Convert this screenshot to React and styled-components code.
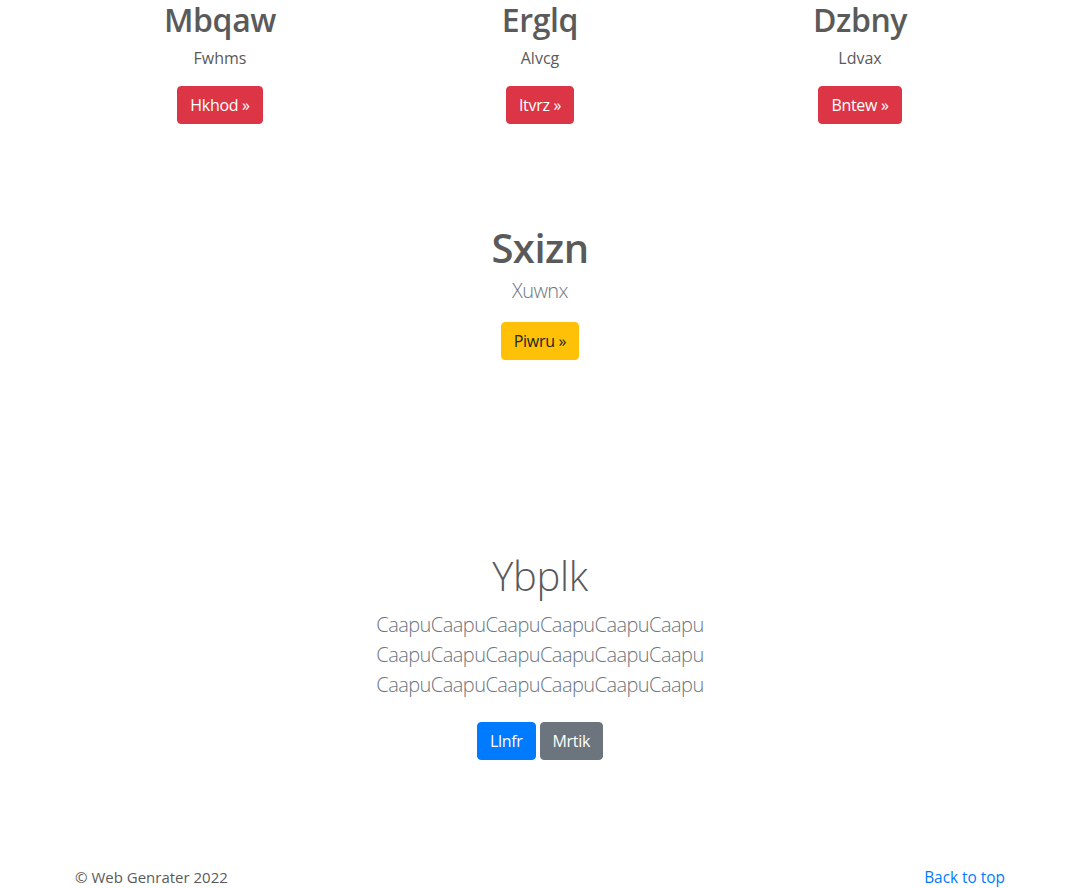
import React from "react";
import styled, { createGlobalStyle } from "styled-components";

const GlobalStyle = createGlobalStyle`
  html, body {
    margin: 0;
    padding: 0;
    background: #fff;
  }
  body {
    font-family: "Open Sans", "Noto Sans", "Liberation Sans", sans-serif;
    font-size: 16px;
    line-height: 1.5;
    color: #5a5a5a;
  }
  * {
    box-sizing: border-box;
  }
`;

const Page = styled.div`
  padding-top: 1px;
`;

const Container = styled.div`
  max-width: 960px;
  margin: 0 auto;
  padding: 0 15px;
`;

const Row = styled.div`
  display: grid;
  grid-template-columns: repeat(3, 1fr);
  margin: 0 -15px;
`;

const Col = styled.div`
  padding: 0 15px;
  text-align: center;
`;

const ColTitle = styled.h2`
  margin: 0 0 7px;
  font-size: 32px;
  font-weight: 600;
  line-height: 1.2;
  letter-spacing: -0.4px;
  color: #5a5a5a;
`;

const Text = styled.p`
  margin: 0 0 16px;
`;

const Section = styled.section`
  text-align: center;
  margin-top: ${(p) => p.$gap}px;
`;

const BigTitle = styled.h1`
  margin: 0 0 ${(p) => p.$mb}px;
  font-size: 40px;
  line-height: 1.2;
  font-weight: ${(p) => (p.$light ? 300 : 600)};
  letter-spacing: ${(p) => (p.$light ? "-0.3px" : "-0.5px")};
  color: #5a5a5a;
`;

const Lead = styled.p`
  margin: 0 0 ${(p) => p.$mb}px;
  font-size: 20px;
  font-weight: 300;
  line-height: 1.5;
  color: #6c757d;
  white-space: pre-line;
  letter-spacing: -0.55px;
`;

const tones = {
  danger: { bg: "#dc3545", fg: "#fff" },
  warning: { bg: "#ffc107", fg: "#212529" },
  primary: { bg: "#007bff", fg: "#fff" },
  secondary: { bg: "#6c757d", fg: "#fff" },
};

const Button = styled.a`
  display: inline-block;
  padding: 6px 12px;
  border: 1px solid ${(p) => tones[p.$tone].bg};
  border-radius: 4px;
  background: ${(p) => tones[p.$tone].bg};
  color: ${(p) => tones[p.$tone].fg};
  font-size: 16px;
  line-height: 1.5;
  text-decoration: none;
  letter-spacing: -0.3px;
`;

const ButtonGroup = styled.div`
  display: flex;
  justify-content: center;
  gap: 4px;
`;

const Footer = styled.footer`
  margin-top: 105px;
  display: flex;
  justify-content: space-between;
  align-items: baseline;
  line-height: 24px;
  font-size: 15px;
`;

const TopLink = styled.a`
  color: #007bff;
  text-decoration: none;
  font-size: 15.4px;
`;

const columns = [
  { title: "Mbqaw", text: "Fwhms", btn: "Hkhod" },
  { title: "Erglq", text: "Alvcg", btn: "Itvrz" },
  { title: "Dzbny", text: "Ldvax", btn: "Bntew" },
];

const line = "CaapuCaapuCaapuCaapuCaapuCaapu";

export default function App() {
  return (
    <Page>
      <GlobalStyle />
      <Container>
        <Row>
          {columns.map((c) => (
            <Col key={c.title}>
              <ColTitle>{c.title}</ColTitle>
              <Text>{c.text}</Text>
              <Button href="#" $tone="danger">
                {c.btn} »
              </Button>
            </Col>
          ))}
        </Row>

        <Section $gap={100}>
          <BigTitle $mb={4}>Sxizn</BigTitle>
          <Lead $mb={16}>Xuwnx</Lead>
          <Button href="#" $tone="warning">
            Piwru »
          </Button>
        </Section>

        <Section $gap={192}>
          <BigTitle $light $mb={10}>
            Ybplk
          </BigTitle>
          <Lead $mb={22}>{[line, line, line].join("\n")}</Lead>
          <ButtonGroup>
            <Button href="#" $tone="primary">
              Llnfr
            </Button>
            <Button href="#" $tone="secondary">
              Mrtik
            </Button>
          </ButtonGroup>
        </Section>

        <Footer>
          <span>© Web Genrater 2022</span>
          <TopLink href="#">Back to top</TopLink>
        </Footer>
      </Container>
    </Page>
  );
}
